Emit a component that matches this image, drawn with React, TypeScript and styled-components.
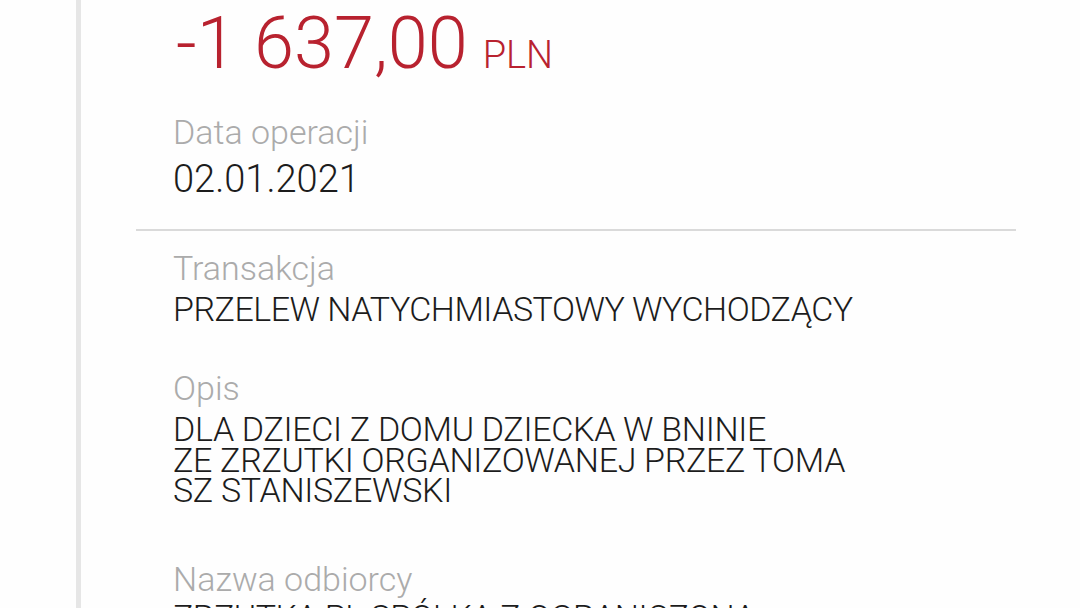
import React from "react";
import styled, { createGlobalStyle } from "styled-components";

const GlobalStyle = createGlobalStyle`
  html, body {
    margin: 0;
    padding: 0;
    background: #fefefe;
    overflow: hidden;
  }
  body {
    font-family: Roboto, "Noto Sans", "DejaVu Sans", sans-serif;
    font-weight: 300;
  }
`;

const Screen = styled.div`
  display: flex;
  width: 1080px;
  height: 608px;
  overflow: hidden;
  background: #fefefe;
`;

const Gutter = styled.div`
  width: 76px;
  flex: none;
`;

const Edge = styled.div`
  width: 5px;
  flex: none;
  background: #e6e6e6;
`;

const Panel = styled.main`
  flex: 1;
  padding-left: 55px;
  box-sizing: border-box;
  display: flex;
  flex-direction: column;
`;

const Section = styled.section<{ $top: number }>`
  flex: none;
  display: flex;
  flex-direction: column;
  padding-left: 37px;
  padding-top: ${(p) => p.$top}px;
`;

const Amount = styled.div`
  display: flex;
  align-items: baseline;
  gap: 15px;
  color: #b8222f;
  padding-left: 3px;
`;

const AmountValue = styled.span`
  font-size: 72px;
  line-height: 70px;
  font-weight: 300;
`;

const Currency = styled.span`
  font-size: 38px;
  line-height: 40px;
  font-weight: 300;
`;

const Label = styled.div`
  font-size: 34px;
  line-height: 38px;
  color: #ababab;
  font-weight: 300;
`;

const Value = styled.div<{ $size?: number; $gap?: number }>`
  font-size: ${(p) => p.$size ?? 34}px;
  line-height: ${(p) => (p.$size ? p.$size + 2 : 38)}px;
  margin-top: ${(p) => p.$gap ?? 3}px;
  color: #1c1c1c;
  font-weight: 300;
  letter-spacing: ${(p) => (p.$size ? 0 : -0.5)}px;
  white-space: nowrap;
`;

const Lines = styled.div`
  margin-top: 7px;
  font-size: 34px;
  line-height: 30.5px;
  color: #1c1c1c;
  font-weight: 300;
  letter-spacing: -0.3px;
`;

const Divider = styled.div`
  flex: none;
  margin-top: 30px;
  width: 880px;
  height: 2px;
  background: #dadada;
`;

export default function App() {
  return (
    <>
      <GlobalStyle />
      <Screen>
        <Gutter />
        <Edge />
        <Panel>
          <Section $top={9}>
            <Amount>
              <AmountValue>-1 637,00</AmountValue>
              <Currency>PLN</Currency>
            </Amount>
          </Section>
          <Section $top={34}>
            <Label>Data operacji</Label>
            <Value $size={38} $gap={8}>
              02.01.2021
            </Value>
          </Section>
          <Divider />
          <Section $top={18}>
            <Label>Transakcja</Label>
            <Value>PRZELEW NATYCHMIASTOWY WYCHODZĄCY</Value>
          </Section>
          <Section $top={41}>
            <Label>Opis</Label>
            <Lines>
              DLA DZIECI Z DOMU DZIECKA W BNINIE
              <br />
              ZE ZRZUTKI ORGANIZOWANEJ PRZEZ TOMA
              <br />
              SZ STANISZEWSKI
            </Lines>
          </Section>
          <Section $top={54}>
            <Label>Nazwa odbiorcy</Label>
            <Value $gap={0}>ZRZUTKA.PL SPÓŁKA Z OGRANICZONĄ</Value>
          </Section>
        </Panel>
      </Screen>
    </>
  );
}
